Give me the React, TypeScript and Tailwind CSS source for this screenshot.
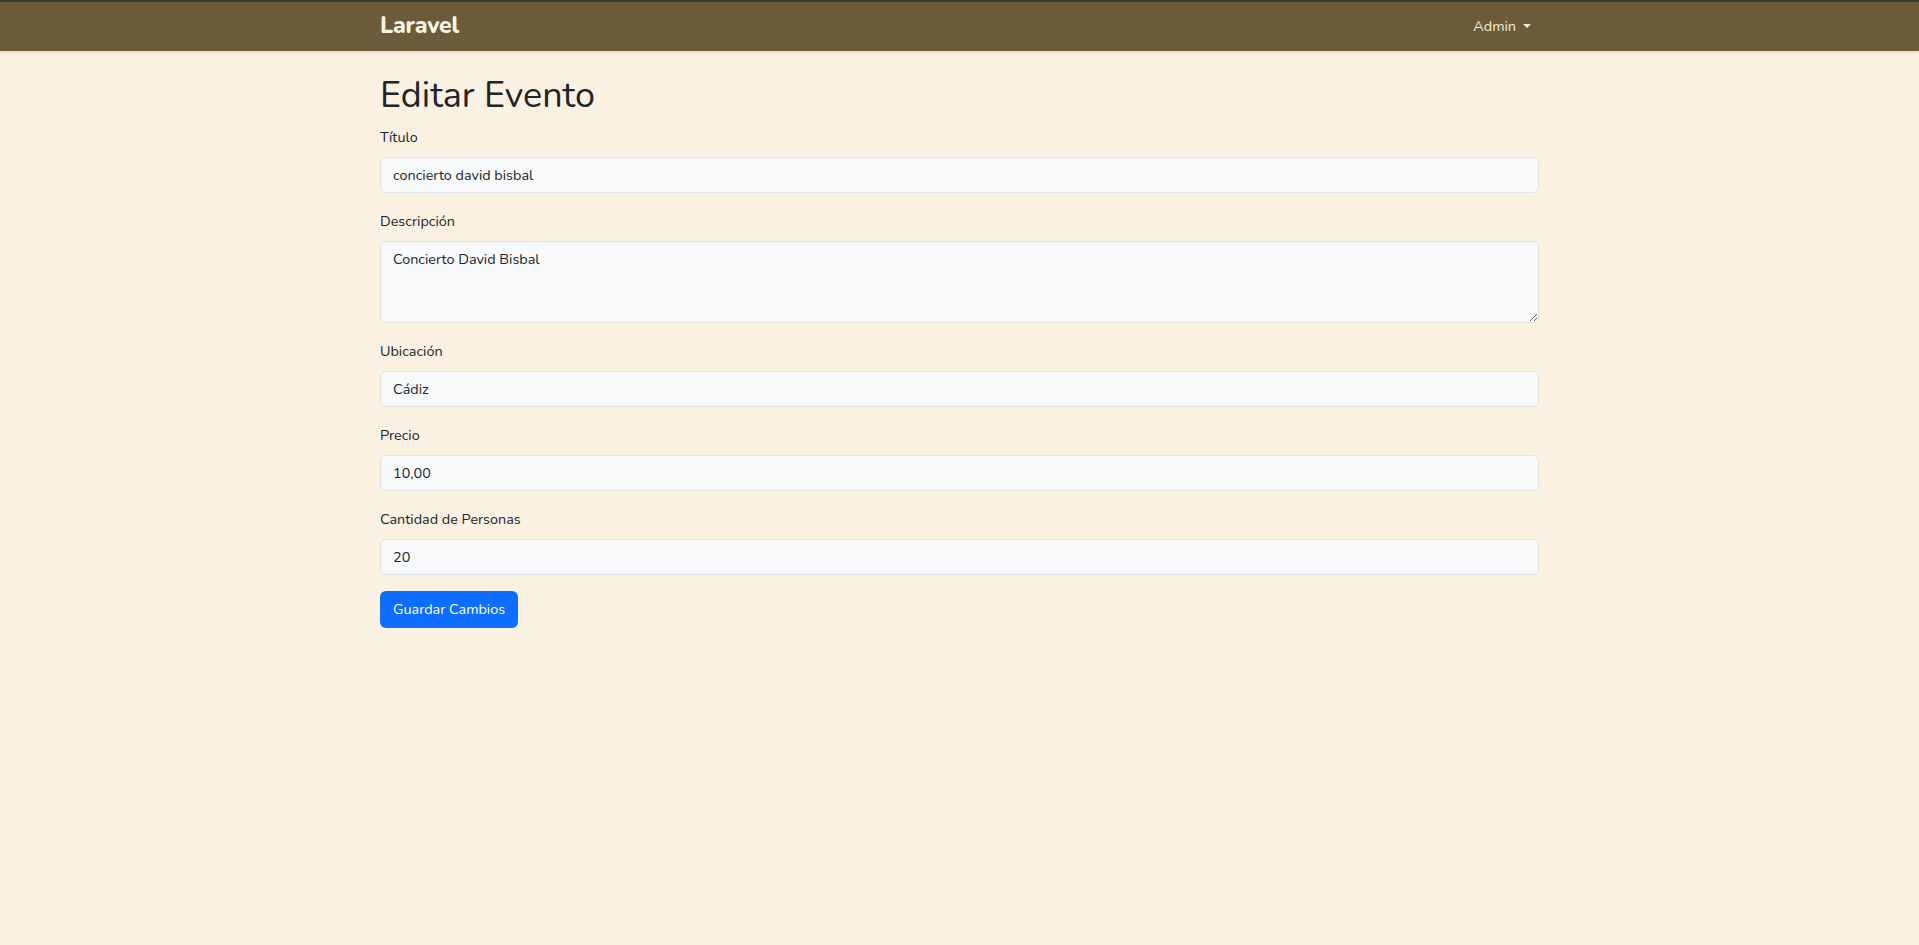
import { useState } from 'react';

const font = { fontFamily: 'Nunito, Lato, "Open Sans", sans-serif' };

function Field({ label, value, onChange }: { label: string; value: string; onChange: (v: string) => void }) {
  return (
    <div className="mb-4">
      <label className="mb-2 block text-[14.4px] leading-[24px] text-[#212529]">{label}</label>
      <input
        value={value}
        onChange={(e) => onChange(e.target.value)}
        className="block h-9 w-full rounded-[6px] border border-[#dee2e6] bg-[#f8f9fa] px-3 text-[14.4px] text-[#212529] outline-none"
      />
    </div>
  );
}

export default function App() {
  const [titulo, setTitulo] = useState('concierto david bisbal');
  const [descripcion, setDescripcion] = useState('Concierto David Bisbal');
  const [ubicacion, setUbicacion] = useState('Cádiz');
  const [precio, setPrecio] = useState('10,00');
  const [cantidad, setCantidad] = useState('20');

  return (
    <div className="min-h-[945px] bg-[#faf1e2]" style={font}>
      <nav className="border-t-2 border-[#3b3b3b] bg-[#6b5b3b] shadow-[0_2px_4px_rgba(0,0,0,0.08)]">
        <div className="mx-auto flex h-[49px] max-w-[1159px] items-center justify-between">
          <a className="text-[23px] font-extrabold tracking-[-0.2px] text-[#fbf3e4]">Laravel</a>
          <button className="flex items-center gap-[7px] px-2 text-[14.4px] text-[#f4ecdc]">
            Admin
            <span className="h-0 w-0 border-x-[4px] border-t-[4px] border-x-transparent border-t-[#f4ecdc]" />
          </button>
        </div>
      </nav>

      <main className="mx-auto max-w-[1159px] pt-6">
        <h1 className="mb-2 text-[36px] leading-[42px] text-[#212529]">Editar Evento</h1>
        <form onSubmit={(e) => e.preventDefault()}>
          <Field label="Título" value={titulo} onChange={setTitulo} />
          <div className="mb-4">
            <label className="mb-2 block text-[14.4px] leading-[24px] text-[#212529]">Descripción</label>
            <textarea
              rows={3}
              value={descripcion}
              onChange={(e) => setDescripcion(e.target.value)}
              className="block h-[82px] w-full rounded-[6px] border border-[#dee2e6] bg-[#f8f9fa] px-3 py-[6px] text-[14.4px] leading-[23px] text-[#212529] outline-none"
            />
          </div>
          <Field label="Ubicación" value={ubicacion} onChange={setUbicacion} />
          <Field label="Precio" value={precio} onChange={setPrecio} />
          <Field label="Cantidad de Personas" value={cantidad} onChange={setCantidad} />
          <button className="h-[37px] rounded-[6px] bg-[#0d6efd] px-[13px] text-[14.4px] text-white">Guardar Cambios</button>
        </form>
      </main>
    </div>
  );
}
